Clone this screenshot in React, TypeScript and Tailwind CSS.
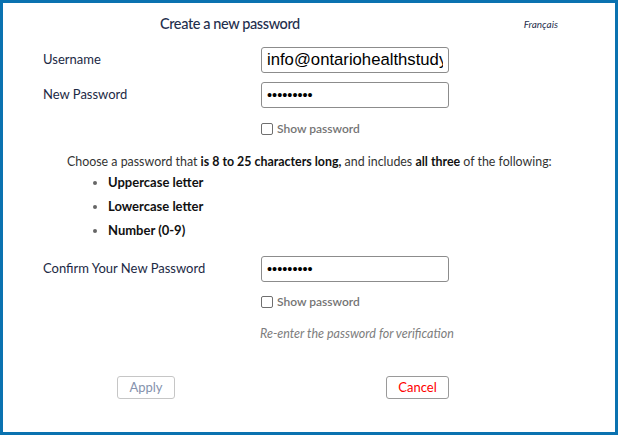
import { useState } from "react"

const labelClass = "w-[258px] pl-[40px] text-[13px] text-[#1c2944]"
const inputClass =
    "w-[188px] h-[26px] border border-[#8c8c8c] rounded-[3px] px-[5px] text-black outline-none"

interface ShowToggleProps {
    checked: boolean
    onChange: () => void
}

const ShowToggle: React.FC<ShowToggleProps> = ({ checked, onChange }) => (
    <label className="flex items-center h-[20px] pl-[258px] cursor-pointer">
        <input
            type="checkbox"
            checked={checked}
            onChange={onChange}
            className="appearance-none w-[12px] h-[12px] border border-[#6f6f6f] rounded-[2px] bg-white m-0"
        />
        <span className="ml-[4px] text-[12px] font-semibold text-[#747474]">Show password</span>
    </label>
)

export default function App() {
    const [showNew, setShowNew] = useState(false)
    const [showConfirm, setShowConfirm] = useState(false)

    return (
        <div
            className="w-[618px] h-[435px] border-[3px] border-[#0a72b0] bg-white overflow-hidden"
            style={{ fontFamily: "Lato, 'Open Sans', sans-serif" }}
        >
            <div className="flex items-center h-[42px]">
                <h1 className="ml-[157px] text-[14.5px] tracking-[-0.4px] font-medium text-[#1f2f4e]">
                    Create a new password
                </h1>
                <a href="#" className="ml-auto mr-[57px] text-[10px] italic text-[#1f2f4e]">Français</a>
            </div>

            <div className="flex items-center mt-[2px]">
                <span className={labelClass}>Username</span>
                <input
                    className={inputClass + " text-[16.7px]"}
                    style={{ fontFamily: "'Liberation Sans', Arial, sans-serif" }}
                    defaultValue="info@ontariohealthstudy.ca"
                />
            </div>

            <div className="flex items-center mt-[9px]">
                <span className={labelClass}>New Password</span>
                <input
                    type={showNew ? "text" : "password"}
                    className={inputClass + " text-[14.5px]"}
                    style={{ fontFamily: "'Liberation Sans', Arial, sans-serif" }}
                    defaultValue="Password1"
                />
            </div>

            <div className="mt-[11px]">
                <ShowToggle checked={showNew} onChange={() => setShowNew(!showNew)} />
            </div>

            <p className="mt-[15px] h-[16px] leading-[16px] pl-[64px] text-[12.4px] text-[#333]">
                Choose a password that <b className="text-[#111]">is 8 to 25 characters long,</b> and includes{" "}
                <b className="text-[#111]">all three</b> of the following:
            </p>
            <ul className="pl-[105px] list-disc marker:text-[#666] text-[13px] font-bold text-[#111]">
                <li className="h-[24px] leading-[24px]">Uppercase letter</li>
                <li className="h-[24px] leading-[24px]">Lowercase letter</li>
                <li className="h-[24px] leading-[24px]">Number (0-9)</li>
            </ul>

            <div className="flex items-center mt-[14px]">
                <span className={labelClass}>Confirm Your New Password</span>
                <input
                    type={showConfirm ? "text" : "password"}
                    className={inputClass + " text-[14.5px]"}
                    style={{ fontFamily: "'Liberation Sans', Arial, sans-serif" }}
                    defaultValue="Password1"
                />
            </div>

            <div className="mt-[10px]">
                <ShowToggle checked={showConfirm} onChange={() => setShowConfirm(!showConfirm)} />
            </div>

            <p className="mt-[14px] h-[16px] leading-[16px] pl-[257px] text-[12.5px] italic text-[#7d7d7d]">
                Re-enter the password for verification
            </p>

            <div className="flex mt-[34px] pl-[114px]">
                <button
                    disabled
                    className="w-[58px] h-[23px] border border-[#c6c6c6] rounded-[3px] text-[13px] text-[#8592ad] bg-white"
                >
                    Apply
                </button>
                <button className="ml-[211px] w-[63px] h-[23px] border border-[#9a9a9a] rounded-[3px] text-[13px] text-[#ff0000] bg-white">
                    Cancel
                </button>
            </div>
        </div>
    )
}
